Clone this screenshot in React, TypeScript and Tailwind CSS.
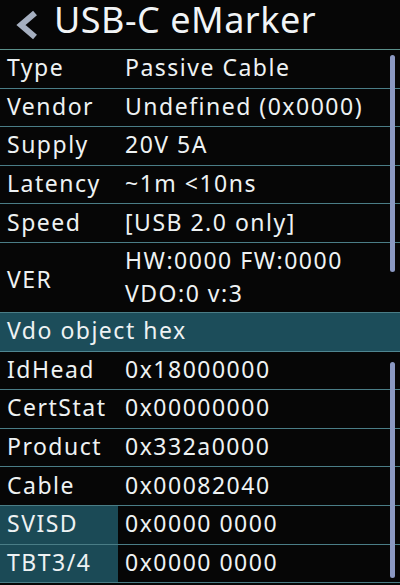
import React from "react";

const font = { fontFamily: '"Noto Sans", "Open Sans", sans-serif' };

function Row({ label, value, hl }: { label: string; value: string; hl?: boolean }) {
  return (
    <div className="flex h-[38.6px] border-b border-[#4a7d86] items-stretch">
      <div className={`w-[118px] pl-[7px] pb-[2px] flex items-center ${hl ? "bg-[#1b4a56]" : ""}`}>{label}</div>
      <div className="pl-[7px] pb-[2px] flex items-center">{value}</div>
    </div>
  );
}

export default function App() {
  return (
    <div
      className="w-[400px] h-[585px] bg-[#060606] overflow-hidden text-[#eef2f3] text-[23px] tracking-[1.5px] leading-none"
      style={font}
    >
      <div className="h-[50px] border-b-[1.5px] border-[#5a8f8a] flex items-start pl-[15px] gap-[15px]">
        <svg width="24" height="30" viewBox="0 0 24 30" className="mt-[10px]">
          <polyline
            points="20,3 6,15 20,27"
            fill="none"
            stroke="#a5afc0"
            strokeWidth="6"
            strokeLinejoin="miter"
            strokeLinecap="butt"
          />
        </svg>
        <span className="text-[36px] leading-[40px] tracking-[0.5px] text-[#f1f4f6]">USB-C eMarker</span>
      </div>

      <div className="relative">
        <Row label="Type" value="Passive Cable" />
        <Row label="Vendor" value="Undefined (0x0000)" />
        <Row label="Supply" value="20V 5A" />
        <Row label="Latency" value="~1m <10ns" />
        <Row label="Speed" value="[USB 2.0 only]" />
        <div className="flex h-[70px] border-b border-[#4a7d86] items-center">
          <div className="w-[118px] pl-[7px] pt-[4px]">VER</div>
          <div className="pl-[7px] flex flex-col gap-[10px]">
            <span>HW:0000 FW:0000</span>
            <span>VDO:0 v:3</span>
          </div>
        </div>
        <div className="absolute right-[5px] top-[5px] w-[5px] h-[217px] rounded-full bg-[#8b98c2]" />
      </div>

      <div className="h-[38.6px] bg-[#1c4d5a] border-b border-[#4f8590] flex items-center pl-[7px] pb-[2px]">
        Vdo object hex
      </div>

      <div className="relative">
        <Row label="IdHead" value="0x18000000" />
        <Row label="CertStat" value="0x00000000" />
        <Row label="Product" value="0x332a0000" />
        <Row label="Cable" value="0x00082040" />
        <Row label="SVISD" value="0x0000 0000" hl />
        <Row label="TBT3/4" value="0x0000 0000" hl />
        <div className="absolute right-[5px] top-[10px] w-[5px] h-[216px] rounded-full bg-[#8b98c2]" />
      </div>
    </div>
  );
}
